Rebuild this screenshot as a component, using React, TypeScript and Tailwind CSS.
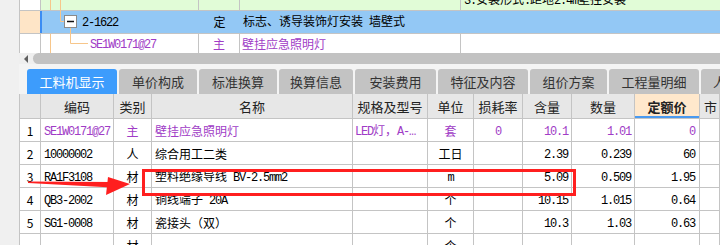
import React from "react";

function T({ s }: { s: string }) {
  const parts = s.match(/[\x20-\x7e…]+|[^\x20-\x7e…]+/g) || [];
  return (
    <span className="whitespace-pre">
      {parts.map((p, i) =>
        /[\x20-\x7e…]/.test(p[0]) ? (
          <span key={i} className="font-['Liberation_Mono',monospace] tracking-[-1.2px]">
            {p}
          </span>
        ) : (
          <span key={i}>{p}</span>
        )
      )}
    </span>
  );
}

const PURPLE = "text-[#a03cc6]";

type Row = {
  n: string;
  code: string;
  type: string;
  name: string;
  spec: string;
  unit: string;
  loss: string;
  qty: string;
  amount: string;
  price: string;
  purple?: boolean;
};

const rows: Row[] = [
  { n: "1", code: "SE1W0171@27", type: "主", name: "壁挂应急照明灯", spec: "LED灯，A-…", unit: "套", loss: "0", qty: "10.1", amount: "1.01", price: "0", purple: true },
  { n: "2", code: "10000002", type: "人", name: "综合用工二类", spec: "", unit: "工日", loss: "", qty: "2.39", amount: "0.239", price: "60" },
  { n: "3", code: "RA1F3108", type: "材", name: "塑料绝缘导线 BV-2.5mm2", spec: "", unit: "m", loss: "", qty: "5.09", amount: "0.509", price: "1.95" },
  { n: "4", code: "QB3-2002", type: "材", name: "铜线端子 20A", spec: "", unit: "个", loss: "", qty: "10.15", amount: "1.015", price: "0.64" },
  { n: "5", code: "SG1-0008", type: "材", name: "瓷接头（双）", spec: "", unit: "个", loss: "", qty: "10.3", amount: "1.03", price: "0.63" },
  { n: "", code: "", type: "材", name: "", spec: "", unit: "个", loss: "", qty: "", amount: "", price: "" },
];

const tabs = [
  { t: "工料机显示", w: "w-[90px]" },
  { t: "单价构成", w: "w-[78px]" },
  { t: "标准换算", w: "w-[78px]" },
  { t: "换算信息", w: "w-[74px]" },
  { t: "安装费用", w: "w-[81px]" },
  { t: "特征及内容", w: "w-[90px]" },
  { t: "组价方案", w: "w-[77px]" },
  { t: "工程量明细", w: "w-[90px]" },
  { t: "人材机", w: "w-[60px]" },
];

const GRID = "grid grid-cols-[21px_73px_38px_201px_75px_46px_49px_49px_63px_65px_1fr]";
const cell = "border-r border-b border-[#c4c4c4] flex items-center overflow-hidden whitespace-nowrap";
const dcell = `${cell} pt-[1px]`;

export default function App() {
  return (
    <div className="relative w-[720px] h-[245px] overflow-hidden flex bg-[#f0f0f0] font-['Noto_Sans_CJK_SC',sans-serif] text-[12px] text-black leading-none">
      <div className="w-[19px] shrink-0 bg-[#f0f0f0]" />
      <div className="flex-1 flex flex-col min-w-0">
        {/* top tree table */}
        <div className="relative h-[53px] bg-white border-l border-[#c4c4c4] flex flex-col">
          <div className="h-[11px] flex border-b border-[#c4c4c4] overflow-hidden">
            <div className="w-[21px] bg-white border-r border-[#c4c4c4]" />
            <div className="w-[158px] bg-[#e1fcd7] border-r border-[#c4c4c4]" />
            <div className="w-[41px] bg-[#e1fcd7] border-r border-[#c4c4c4]" />
            <div className="w-[221px] bg-[#e1fcd7] border-r border-[#c4c4c4]" />
            <div className="flex-1 bg-[#e1fcd7] pl-[3px] overflow-hidden whitespace-nowrap">
              <div className="mt-[-7px] h-[12px]"><T s="3.安装形式:距地2.4m壁挂安装" /></div>
            </div>
          </div>
          <div className="h-[23px] flex border-b border-[#c4c4c4]">
            <div className="w-[20px] bg-[#fee5c7]" />
            <div className="w-[2px] bg-[#3b8cf3]" />
            <div className="flex-1 bg-[#93c8f5] flex items-center">
              <div className="w-[157px] pl-[40px]"><T s="2-1622" /></div>
              <div className="w-[41px] flex justify-center">定</div>
              <div className="pl-[3px] whitespace-nowrap"><T s="标志、诱导装饰灯安装 墙壁式" /></div>
            </div>
          </div>
          <div className="h-[19px] flex">
            <div className="w-[21px] border-r border-[#c4c4c4]" />
            <div className={`w-[158px] border-r border-[#c4c4c4] pl-[49px] flex items-center ${PURPLE}`}><T s="SE1W0171@27" /></div>
            <div className={`w-[41px] border-r border-[#c4c4c4] flex items-center justify-center ${PURPLE}`}>主</div>
            <div className={`w-[221px] border-r border-[#c4c4c4] pl-[2px] flex items-center ${PURPLE}`}>壁挂应急照明灯</div>
            <div className="flex-1" />
          </div>
          <svg className="absolute left-0 top-0 pointer-events-none" width="701" height="53">
            <g stroke="#f7c68a" strokeWidth="1" fill="none">
              <line x1="30.5" y1="0" x2="30.5" y2="10" />
              <line x1="30.5" y1="34" x2="30.5" y2="53" />
              <line x1="40.5" y1="0" x2="40.5" y2="21.5" />
              <line x1="40.5" y1="21.5" x2="44" y2="21.5" />
              <line x1="50.5" y1="28" x2="50.5" y2="43.5" />
              <line x1="50.5" y1="43.5" x2="68" y2="43.5" />
            </g>
            <rect x="44.5" y="15.5" width="12" height="12" fill="white" stroke="#8a8a8a" />
            <line x1="47" y1="21.5" x2="54" y2="21.5" stroke="#111" strokeWidth="1.5" />
          </svg>
        </div>
        <div className="h-[2px] bg-[#e6e6e6]" />
        {/* scrollbar */}
        <div className="h-[13px] bg-[#efefef] flex items-center">
          <div className="w-[14px] flex justify-center">
            <div className="w-0 h-0 border-y-[4px] border-y-transparent border-r-[4px] border-r-[#606060]" />
          </div>
          <div className="flex-1 h-[11px] rounded-l-full bg-[#c2c2c2]" />
        </div>
        <div className="h-[2px] bg-[#a8a8a8]" />
        {/* tabs */}
        <div className="h-[30px] bg-[#f4f4f4] pt-[5px] pl-[8px] flex gap-[2px] text-[13px]">
          {tabs.map((tb, i) => (
            <div
              key={tb.t}
              className={`${tb.w} shrink-0 h-[25px] rounded-t-[3px] flex items-center ${i === 8 ? "pl-[12px]" : "justify-center"} whitespace-nowrap overflow-hidden ${
                i === 0 ? "bg-[#3d9cfc] text-white" : "bg-[#c3c3c3] text-[#333]"
              }`}
            >
              {tb.t}
            </div>
          ))}
        </div>
        {/* table */}
        <div className="flex-1 bg-white border-l border-[#c4c4c4]">
          <div className={`${GRID} h-[25px] bg-[#e7e7e7] text-[13px] text-[#222]`}>
            <div className={cell} />
            <div className={`${cell} justify-center`}>编码</div>
            <div className={`${cell} justify-center`}>类别</div>
            <div className={`${cell} justify-center`}>名称</div>
            <div className={`${cell} justify-center`}>规格及型号</div>
            <div className={`${cell} justify-center`}>单位</div>
            <div className={`${cell} justify-center`}>损耗率</div>
            <div className={`${cell} justify-center`}>含量</div>
            <div className={`${cell} justify-center`}>数量</div>
            <div className={`${cell} justify-center bg-[#ffe8cc] font-bold relative`}>
              定额价
              <div className="absolute left-0 right-0 bottom-0 h-[2px] bg-[#4a9af0]" />
            </div>
            <div className={`${cell} pl-[4px]`}>市</div>
          </div>
          {rows.map((r, i) => {
            const c = r.purple ? PURPLE : "";
            return (
              <div key={i} className={`${GRID} h-[23px] ${c}`}>
                <div className={`${dcell} justify-center text-black`}>{r.n}</div>
                <div className={`${dcell} pl-[3px]`}><T s={r.code} /></div>
                <div className={`${dcell} justify-center`}>{r.type}</div>
                <div className={`${dcell} pl-[3px]`}><T s={r.name} /></div>
                <div className={`${dcell} pl-[2px]`}><T s={r.spec} /></div>
                <div className={`${dcell} justify-center`}><T s={r.unit} /></div>
                <div className={`${dcell} justify-center`}><T s={r.loss} /></div>
                <div className={`${dcell} justify-end pr-[3px]`}><T s={r.qty} /></div>
                <div className={`${dcell} justify-end pr-[3px]`}><T s={r.amount} /></div>
                <div className={`${dcell} justify-end pr-[4px]`}><T s={r.price} /></div>
                <div className={dcell} />
              </div>
            );
          })}
        </div>
      </div>
      {/* annotation overlays */}
      <div className="absolute left-[142px] top-[169px] w-[434px] h-[27px] border-[3px] border-[#ff1f1f] pointer-events-none" />
      <svg className="absolute left-0 top-0 pointer-events-none" width="720" height="245">
        <polygon points="28,181.5 112,182 112,187.5 28,183" fill="#ff1f1f" />
        <polygon points="108,177 130,184 106,195" fill="#ff1f1f" />
      </svg>
    </div>
  );
}
